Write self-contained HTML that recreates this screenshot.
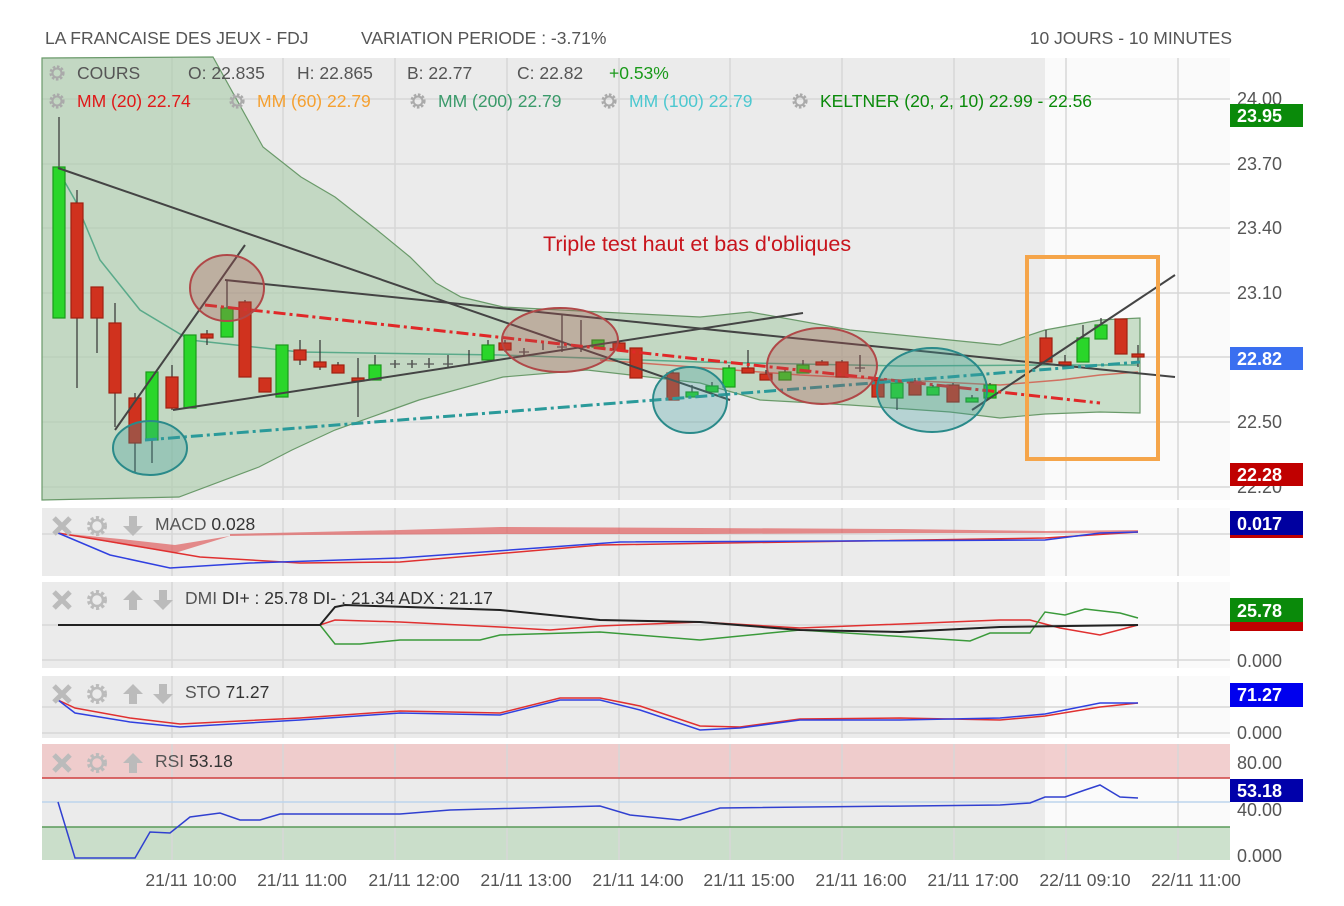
<!DOCTYPE html>
<html><head><meta charset="utf-8"><style>
html,body{margin:0;padding:0;background:#fff;}
svg{display:block;font-family:"Liberation Sans",Arial,sans-serif;}
</style></head><body>
<svg width="1344" height="906" viewBox="0 0 1344 906" xmlns="http://www.w3.org/2000/svg">
<defs>
<g id="gear"><circle r="6" fill="none" stroke="#aaa" stroke-width="3.2" stroke-dasharray="2.4 1.6"/><circle r="4.5" fill="none" stroke="#aaa" stroke-width="2"/></g>
<g id="gearb"><circle r="8" fill="none" stroke="#bbb" stroke-width="4" stroke-dasharray="3 2.2"/><circle r="6" fill="none" stroke="#bbb" stroke-width="2.5"/></g>
<g id="xx"><path d="M-8,-8L8,8M8,-8L-8,8" stroke="#bbb" stroke-width="5"/></g>
<g id="up"><path d="M0,-10L10,0H4V10H-4V0H-10Z" fill="#bbb"/></g>
<g id="dn"><path d="M0,10L10,0H4V-10H-4V0H-10Z" fill="#bbb"/></g>
</defs>
<rect width="1344" height="906" fill="#fff"/>
<g font-size="17.5" fill="#555">
<text x="45" y="44">LA FRANCAISE DES JEUX - FDJ</text>
<text x="361" y="44">VARIATION PERIODE : -3.71%</text>
<text x="1232" y="44" text-anchor="end">10 JOURS - 10 MINUTES</text>
</g>

<g>
<rect x="42" y="58" width="1003" height="442" fill="#ebebeb"/>
<rect x="1045" y="58" width="185" height="442" fill="#fafafa"/>
<rect x="42" y="508" width="1003" height="68" fill="#ebebeb"/>
<rect x="1045" y="508" width="185" height="68" fill="#fafafa"/>
<rect x="42" y="582" width="1003" height="86" fill="#ebebeb"/>
<rect x="1045" y="582" width="185" height="86" fill="#fafafa"/>
<rect x="42" y="676" width="1003" height="62" fill="#ebebeb"/>
<rect x="1045" y="676" width="185" height="62" fill="#fafafa"/>
<rect x="42" y="744" width="1003" height="116" fill="#ebebeb"/>
<rect x="1045" y="744" width="185" height="116" fill="#fafafa"/>
<rect x="42" y="744" width="1188" height="34" fill="#f0c4c4" opacity="0.8"/>
<rect x="42" y="827" width="1188" height="33" fill="#c4dcc4" opacity="0.85"/>
</g>
<g stroke="#d7d7d7" stroke-width="1.5">
<path d="M172,58V860M283,58V860M395,58V860M507,58V860M619,58V860M730,58V860M842,58V860M954,58V860M1066,58V860M1178,58V860"/>
<path d="M42,99H1230M42,164H1230M42,228H1230M42,293H1230M42,357H1230M42,422H1230M42,487H1230"/>
<path d="M42,534H1230M42,625H1230M42,660H1230M42,707H1230M42,733H1230"/>
</g>
<g fill="none" stroke-width="1.5">
<path d="M42,778H1230" stroke="#d04040"/>
<path d="M42,802H1230" stroke="#bcd4ec"/>
<path d="M42,827H1230" stroke="#5a9a5a"/>
</g>
<g fill="#fff"><rect x="42" y="500" width="1188" height="8"/><rect x="42" y="576" width="1188" height="6"/><rect x="42" y="668" width="1188" height="8"/><rect x="42" y="738" width="1188" height="6"/></g>

<path d="M42,58 L213,57 263,147 301,177 335,197 377,230 410,257 436,283 461,297 503,307 600,312 700,317 750,312 850,330 950,340 1000,345 1045,330 1100,320 1140,318 L1140,413 1100,412 1045,414 1000,418 950,412 850,405 760,400 700,383 587,370 503,377 419,400 335,430 292,450 259,467 179,497 42,500Z" fill="#a9cca9" fill-opacity="0.6" stroke="#6a9a6a" stroke-width="1.2"/>
<polyline points="58,170 75,200 100,260 140,310 190,340 300,352 500,355 700,362 900,366 1045,365 1138,365" fill="none" stroke="#5aaa8a" stroke-width="1.5"/>
<polyline points="600,360 800,375 1000,385 1060,380 1100,375 1138,372" fill="none" stroke="#d07060" stroke-width="1.5"/>

<g stroke-width="1.2">
<g stroke="#333">
<path d="M59,117V318M77,190V388M97,287V353M115,303V427M135,393V472M152,372V463M172,365V410M190,335V408M207,330V345M227,280V337M245,300V377M265,378V392M282,345V397M300,340V365M320,340V370M338,362V373M358,358V417M375,355V380M395,360V368M412,360V368M429,358V368M448,355V368M469,350V365M488,340V360M505,340V352M524,348V356M543,342V350M562,315V352M581,320V352M598,340V347M619,342V350M636,348V378M673,370V400M692,385V397M712,382V392M729,365V387M748,350V373M766,370V380M785,368V380M803,360V373M822,360V365M842,360V377M860,355V372M878,378V397M897,380V410M915,378V395M933,385V395M953,383V402M972,395V402M990,383V398M1046,330V362M1065,355V365M1083,325V362M1101,318V339M1121,319V354M1138,345V367"/>
</g>
<g fill="#2ad62a" stroke="#1a9a1a">
<rect x="53" y="167" width="12" height="151"/><rect x="146" y="372" width="12" height="68"/><rect x="184" y="335" width="12" height="73"/><rect x="221" y="308" width="12" height="29"/><rect x="276" y="345" width="12" height="52"/><rect x="369" y="365" width="12" height="15"/><rect x="482" y="345" width="12" height="15"/><rect x="592" y="340" width="12" height="7"/><rect x="686" y="392" width="12" height="5"/><rect x="706" y="386" width="12" height="6"/><rect x="723" y="368" width="12" height="19"/><rect x="779" y="372" width="12" height="8"/><rect x="797" y="365" width="12" height="8"/><rect x="891" y="383" width="12" height="15"/><rect x="927" y="387" width="12" height="8"/><rect x="966" y="398" width="12" height="4"/><rect x="984" y="385" width="12" height="13"/><rect x="1077" y="338" width="12" height="24"/><rect x="1095" y="325" width="12" height="14"/>
</g>
<g fill="#d0321e" stroke="#a02010">
<rect x="71" y="203" width="12" height="115"/><rect x="91" y="287" width="12" height="31"/><rect x="109" y="323" width="12" height="70"/><rect x="129" y="398" width="12" height="45"/><rect x="166" y="377" width="12" height="31"/><rect x="201" y="334" width="12" height="4"/><rect x="239" y="302" width="12" height="75"/><rect x="259" y="378" width="12" height="14"/><rect x="294" y="350" width="12" height="10"/><rect x="314" y="362" width="12" height="5"/><rect x="332" y="365" width="12" height="8"/><rect x="352" y="378" width="12" height="3"/><rect x="499" y="343" width="12" height="7"/><rect x="613" y="343" width="12" height="7"/><rect x="630" y="348" width="12" height="30"/><rect x="667" y="373" width="12" height="27"/><rect x="742" y="368" width="12" height="5"/><rect x="760" y="374" width="12" height="6"/><rect x="816" y="362" width="12" height="3"/><rect x="836" y="362" width="12" height="15"/><rect x="872" y="380" width="12" height="17"/><rect x="909" y="382" width="12" height="13"/><rect x="947" y="385" width="12" height="17"/><rect x="1040" y="338" width="12" height="24"/><rect x="1059" y="362" width="12" height="3"/><rect x="1115" y="319" width="12" height="35"/><rect x="1132" y="354" width="12" height="3"/>
</g>
<path d="M390,364H400M407,364H417M424,364H434M443,364H453M519,352H529M557,347H567M576,347H586M855,368H865" stroke="#555"/>
</g>

<g fill="none" stroke="#444" stroke-width="2">
<path d="M58,168L730,400"/><path d="M115,430L245,245"/><path d="M173,410L803,313"/><path d="M225,280L1175,377"/><path d="M972,410L1175,275"/>
</g>
<path d="M205,305L1100,403" stroke="#e02828" stroke-width="3" stroke-dasharray="12 4 3 4" fill="none"/>
<path d="M145,440L1140,362" stroke="#2a9a9a" stroke-width="3" stroke-dasharray="12 4 3 4" fill="none"/>
<g stroke-width="2">
<ellipse cx="227" cy="288" rx="37" ry="33" fill="#b05050" fill-opacity="0.3" stroke="#b04848"/>
<ellipse cx="150" cy="448" rx="37" ry="27" fill="#3a9a9a" fill-opacity="0.3" stroke="#2a8a8a"/>
<ellipse cx="560" cy="340" rx="58" ry="32" fill="#b05050" fill-opacity="0.3" stroke="#b04848"/>
<ellipse cx="690" cy="400" rx="37" ry="33" fill="#3a9a9a" fill-opacity="0.3" stroke="#2a8a8a"/>
<ellipse cx="822" cy="366" rx="55" ry="38" fill="#b05050" fill-opacity="0.3" stroke="#b04848"/>
<ellipse cx="932" cy="390" rx="55" ry="42" fill="#3a9a9a" fill-opacity="0.3" stroke="#2a8a8a"/>
</g>
<rect x="1027" y="257" width="131" height="202" fill="none" stroke="#f5a54a" stroke-width="4"/>
<text x="543" y="251" font-size="21.5" fill="#c8141c">Triple test haut et bas d'obliques</text>

<g font-size="17.5">
<use href="#gear" x="57" y="73"/><text x="77" y="79" fill="#555">COURS</text>
<text x="188" y="79" fill="#555">O: 22.835</text><text x="297" y="79" fill="#555">H: 22.865</text><text x="407" y="79" fill="#555">B: 22.77</text><text x="517" y="79" fill="#555">C: 22.82</text><text x="609" y="79" fill="#1a9a1a">+0.53%</text>
<use href="#gear" x="57" y="101"/><text x="77" y="107" fill="#e01818">MM (20)  22.74</text>
<use href="#gear" x="237" y="101"/><text x="257" y="107" fill="#f5a030">MM (60)  22.79</text>
<use href="#gear" x="418" y="101"/><text x="438" y="107" fill="#3a9a6a">MM (200)  22.79</text>
<use href="#gear" x="609" y="101"/><text x="629" y="107" fill="#4cc8d0">MM (100)  22.79</text>
<use href="#gear" x="800" y="101"/><text x="820" y="107" fill="#0a8a0a">KELTNER (20, 2, 10)  22.99 - 22.56</text>
</g>

<!-- MACD -->
<path d="M58,533 L130,546 175,553 230,536 175,545 130,540Z" fill="#e06060" fill-opacity="0.7"/>
<path d="M230,534 L400,530 500,527 700,528 900,529 1045,531 1138,530 L1138,533 900,533 700,534 500,534 300,535 230,536Z" fill="#e06060" fill-opacity="0.7"/>
<polyline points="58,533 130,545 200,557 300,563 400,562 600,545 1045,538 1138,532" fill="none" stroke="#e03030" stroke-width="1.5"/>
<polyline points="58,533 110,555 170,568 250,563 400,558 620,542 1045,540 1100,533 1138,532" fill="none" stroke="#3040e0" stroke-width="1.5"/>
<!-- DMI -->
<polyline points="58,625 320,625 335,620 400,622 500,627 550,630 600,626 700,622 800,628 1000,620 1030,620 1060,628 1100,635 1138,625" fill="none" stroke="#e03030" stroke-width="1.5"/>
<polyline points="320,625 335,644 360,644 400,640 480,640 500,635 600,632 700,640 800,630 970,641 990,633 1030,633 1045,612 1065,615 1085,609 1120,613 1138,618" fill="none" stroke="#3a9a3a" stroke-width="1.5"/>
<polyline points="58,625 320,625 335,607 345,605 500,610 600,620 700,622 800,630 900,632 1000,627 1138,625" fill="none" stroke="#222" stroke-width="2"/>
<!-- STO -->
<polyline points="58,700 75,708 130,718 180,724 300,718 400,711 500,713 560,698 600,698 640,706 700,726 740,727 800,719 900,718 1000,720 1045,716 1100,707 1138,703" fill="none" stroke="#e03030" stroke-width="1.5"/>
<polyline points="58,700 75,713 130,722 180,727 300,720 400,713 500,715 560,700 600,700 640,710 700,730 740,728 800,720 900,720 1000,718 1045,714 1100,703 1138,703" fill="none" stroke="#3040e0" stroke-width="1.5"/>
<!-- RSI -->
<polyline points="58,802 75,858 135,858 150,832 170,833 190,817 220,813 240,820 260,820 280,814 400,814 450,810 600,806 630,815 680,820 720,808 1000,805 1030,803 1045,797 1065,797 1085,790 1100,785 1120,797 1138,798" fill="none" stroke="#3040d0" stroke-width="1.5"/>

<g>
<use href="#xx" x="62" y="526"/><use href="#gearb" x="97" y="526"/><use href="#dn" x="133" y="526"/>
<use href="#xx" x="62" y="600"/><use href="#gearb" x="97" y="600"/><use href="#up" x="133" y="600"/><use href="#dn" x="163" y="600"/>
<use href="#xx" x="62" y="694"/><use href="#gearb" x="97" y="694"/><use href="#up" x="133" y="694"/><use href="#dn" x="163" y="694"/>
<use href="#xx" x="62" y="763"/><use href="#gearb" x="97" y="763"/><use href="#up" x="133" y="763"/>
</g>
<g font-size="17.5" fill="#555">
<text x="155" y="530">MACD <tspan fill="#333">0.028</tspan></text>
<text x="185" y="604">DMI  <tspan fill="#333">DI+ : 25.78 DI- : 21.34 ADX : 21.17</tspan></text>
<text x="185" y="698">STO <tspan fill="#333">71.27</tspan></text>
<text x="155" y="767">RSI <tspan fill="#333">53.18</tspan></text>
</g>

<g font-size="18" fill="#555">
<text x="1237" y="105">24.00</text><text x="1237" y="170">23.70</text><text x="1237" y="234">23.40</text><text x="1237" y="299">23.10</text><text x="1237" y="428">22.50</text><text x="1237" y="493">22.20</text>
<text x="1237" y="667">0.000</text><text x="1237" y="739">0.000</text><text x="1237" y="769">80.00</text><text x="1237" y="816">40.00</text><text x="1237" y="862">0.000</text>
</g>
<g font-size="18" fill="#fff" font-weight="bold">
<rect x="1230" y="104" width="73" height="23" fill="#0a8a0a"/><text x="1237" y="122">23.95</text>
<rect x="1230" y="347" width="73" height="23" fill="#3a6ff0"/><text x="1237" y="365">22.82</text>
<rect x="1230" y="463" width="73" height="23" fill="#c00000"/><text x="1237" y="481">22.28</text>
<rect x="1230" y="511" width="73" height="27" fill="#c00000"/><rect x="1230" y="511" width="73" height="24" fill="#0000a0"/><text x="1237" y="530">0.017</text>
<rect x="1230" y="598" width="73" height="33" fill="#c00000"/><rect x="1230" y="598" width="73" height="24" fill="#0a8a0a"/><text x="1237" y="617">25.78</text>
<rect x="1230" y="683" width="73" height="24" fill="#0000ee"/><text x="1237" y="701">71.27</text>
<rect x="1230" y="779" width="73" height="23" fill="#0000aa"/><text x="1237" y="797">53.18</text>
</g>

<g font-size="17.5" fill="#555" text-anchor="middle">
<text x="191" y="886">21/11 10:00</text><text x="302" y="886">21/11 11:00</text><text x="414" y="886">21/11 12:00</text><text x="526" y="886">21/11 13:00</text><text x="638" y="886">21/11 14:00</text><text x="749" y="886">21/11 15:00</text><text x="861" y="886">21/11 16:00</text><text x="973" y="886">21/11 17:00</text><text x="1085" y="886">22/11 09:10</text><text x="1196" y="886">22/11 11:00</text>
</g>
</svg>
</body></html>
